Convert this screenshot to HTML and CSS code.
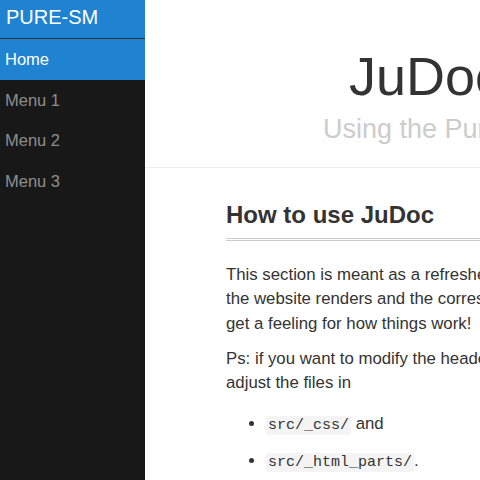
FILE: index.html
```html
<!DOCTYPE html>
<html lang="en">
<head>
<meta charset="utf-8">
<title>JuDoc</title>
<link rel="stylesheet" href="styles.css">
</head>
<body>
<div class="layout">
  <nav class="menu">
    <a class="menu-heading" href="#">PURE-SM</a>
    <ul class="menu-list">
      <li class="menu-item selected"><a href="#">Home</a></li>
      <li class="menu-item"><a href="#">Menu 1</a></li>
      <li class="menu-item"><a href="#">Menu 2</a></li>
      <li class="menu-item"><a href="#">Menu 3</a></li>
    </ul>
  </nav>
  <main class="main">
    <header class="header">
      <h1 class="title">JuDoc</h1>
      <h2 class="subtitle">Using the Pure CSS framework</h2>
    </header>
    <div class="content">
      <h2 class="section-title">How to use JuDoc</h2>
      <p>This section is meant as a refresher if you're new to JuDoc. Have a look at both how<br>the website renders and the corresponding markdown (<code>index.md</code>) in order to<br>get a feeling for how things work!</p>
      <p>Ps: if you want to modify the header or the footer or the general look of the website,<br>adjust the files in</p>
      <ul class="list">
        <li><code>src/_css/</code> and</li>
        <li><code>src/_html_parts/</code>.</li>
      </ul>
    </div>
  </main>
</div>
</body>
</html>
```
FILE: styles.css
```css
html, body {
  margin: 0;
  padding: 0;
  height: 100%;
  overflow: hidden;
}
body {
  font-family: "Liberation Sans", Arial, Helvetica, sans-serif;
  color: #333;
  background: #fff;
}
.layout {
  display: flex;
  height: 100vh;
  overflow: hidden;
}
.menu {
  flex: 0 0 145px;
  width: 145px;
  background: #191818;
  display: flex;
  flex-direction: column;
}
.menu-heading {
  display: block;
  height: 38px;
  line-height: 34px;
  padding: 0 6px;
  font-size: 20px;
  color: #fff;
  background: #1f83d2;
  text-decoration: none;
  border-bottom: 1px solid #333;
  text-transform: uppercase;
}
.menu-list {
  list-style: none;
  margin: 0;
  padding: 0;
}
.menu-item a {
  display: block;
  padding: 8.25px 5px;
  line-height: 24px;
  font-size: 16.5px;
  color: #8e8e8e;
  text-decoration: none;
}
.menu-item.selected a {
  background: #1f83d2;
  color: #fff;
}
.main {
  flex: 0 0 898px;
  width: 898px;
}
.header {
  border-bottom: 1px solid #eee;
  padding: 47px 0 22px 0;
  color: #333;
}
.title {
  margin: 0 0 0 204px;
  font-size: 54px;
  font-weight: 300;
  line-height: 59px;
  white-space: nowrap;
}
.subtitle {
  margin: 7px 0 0 178px;
  font-size: 27px;
  font-weight: 300;
  color: #ccc;
  line-height: 32px;
  white-space: nowrap;
}
.content {
  padding: 0 32px 0 81px;
  font-size: 16.8px;
  line-height: 23.5px;
}
.section-title {
  margin: 32px 0 0;
  font-size: 24px;
  font-weight: bold;
  line-height: 30px;
  padding-bottom: 8px;
  border-bottom: 3px double #ccc;
  white-space: nowrap;
}
.content p {
  margin: 22px 0 0;
  white-space: nowrap;
}
.content p + p {
  margin-top: 11.5px;
}
.list {
  margin: 17.5px 0 0;
  padding-left: 40px;
}
.list li {
  margin-bottom: 11.5px;
}
code {
  font-family: "Liberation Mono", "DejaVu Sans Mono", monospace;
  font-size: 15px;
  background: #f4f4f4;
  padding: 1px 2px;
  border-radius: 2px;
}
```
